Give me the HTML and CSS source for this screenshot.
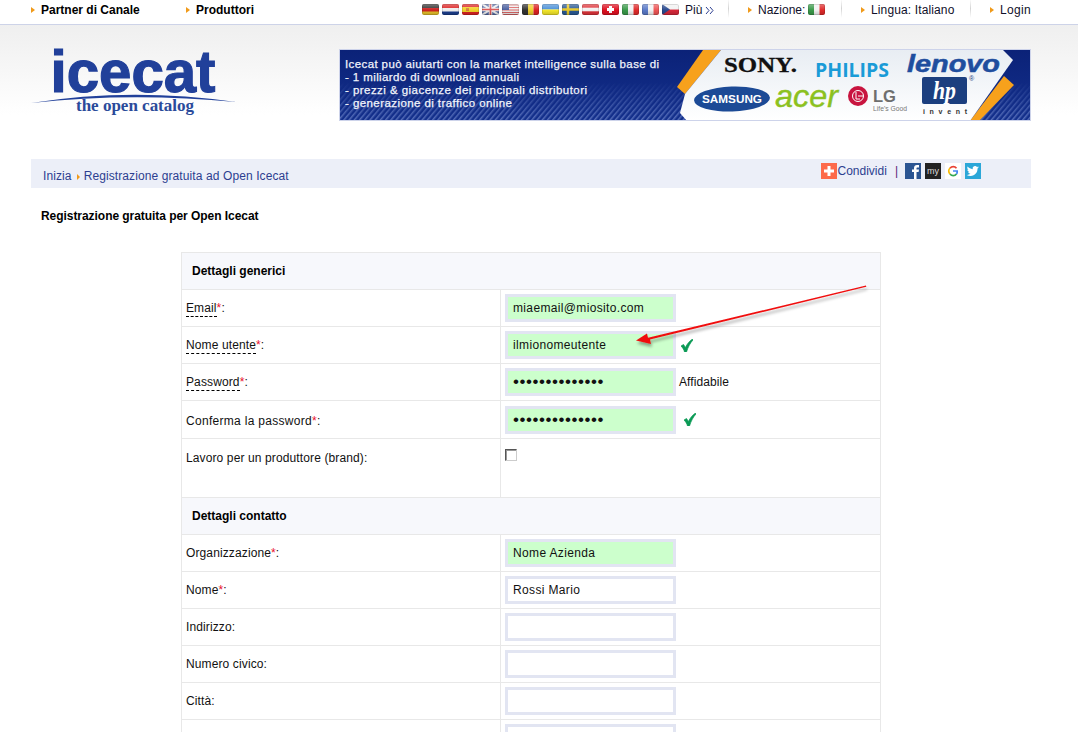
FILE: index.html
```html
<!DOCTYPE html>
<html lang="it">
<head>
<meta charset="utf-8">
<title>Registrazione gratuita per Open Icecat</title>
<link rel="stylesheet" href="styles.css">
</head>
<body>
<nav class="topbar">
  <a class="nav-item partner" href="#">Partner di Canale</a>
  <a class="nav-item products" href="#">Produttori</a>
  <div class="flags">
    <span class="flag"><svg viewBox="0 0 17 11"><rect width="17" height="4" fill="#333"/><rect y="4" width="17" height="4" fill="#c22"/><rect y="7.5" width="17" height="3.5" fill="#e8c22a"/></svg></span>
    <span class="flag"><svg viewBox="0 0 17 11"><rect width="17" height="4" fill="#d22"/><rect y="4" width="17" height="3.5" fill="#eee"/><rect y="7.5" width="17" height="3.5" fill="#1c3f8f"/></svg></span>
    <span class="flag"><svg viewBox="0 0 17 11"><rect width="17" height="11" fill="#d22"/><rect y="3" width="17" height="5" fill="#f2d02a"/><rect x="4" y="4" width="3" height="3" fill="#d8803a"/></svg></span>
    <span class="flag"><svg viewBox="0 0 17 11"><rect width="17" height="11" fill="#5a6fa8"/><path d="M0 0L17 11M17 0L0 11" stroke="#eee" stroke-width="2"/><path d="M8.5 0V11M0 5.5H17" stroke="#eee" stroke-width="3.5"/><path d="M8.5 0V11M0 5.5H17" stroke="#d55" stroke-width="1.6"/></svg></span>
    <span class="flag"><svg viewBox="0 0 17 11"><rect width="17" height="11" fill="#eee"/><path d="M0 1H17M0 3.5H17M0 6H17M0 8.5H17M0 10.5H17" stroke="#d66" stroke-width="1.2"/><rect width="7" height="6" fill="#4a5f9f"/></svg></span>
    <span class="flag"><svg viewBox="0 0 17 11"><rect width="6" height="11" fill="#333"/><rect x="6" width="5.5" height="11" fill="#f0d030"/><rect x="11.5" width="5.5" height="11" fill="#d22"/></svg></span>
    <span class="flag"><svg viewBox="0 0 17 11"><rect width="17" height="5.5" fill="#4a90d8"/><rect y="5.5" width="17" height="5.5" fill="#f5e82a"/></svg></span>
    <span class="flag"><svg viewBox="0 0 17 11"><rect width="17" height="11" fill="#2a5a95"/><path d="M6 0V11M0 5.5H17" stroke="#e8c82a" stroke-width="2.5"/></svg></span>
    <span class="flag"><svg viewBox="0 0 17 11"><rect width="17" height="11" fill="#e0343a"/><rect y="3.7" width="17" height="3.6" fill="#f2f2f2"/></svg></span>
    <span class="flag"><svg viewBox="0 0 17 11"><rect width="17" height="11" fill="#e01020"/><path d="M8.5 2V9M5 5.5H12" stroke="#fff" stroke-width="3"/></svg></span>
    <span class="flag"><svg viewBox="0 0 17 11"><rect width="6" height="11" fill="#3a9a4a"/><rect x="6" width="5.5" height="11" fill="#f2f2f2"/><rect x="11.5" width="5.5" height="11" fill="#e02a2a"/></svg></span>
    <span class="flag"><svg viewBox="0 0 17 11"><rect width="6" height="11" fill="#5a7ac8"/><rect x="6" width="5.5" height="11" fill="#f2f2f2"/><rect x="11.5" width="5.5" height="11" fill="#e55"/></svg></span>
    <span class="flag"><svg viewBox="0 0 17 11"><rect width="17" height="5.5" fill="#f2f2f2"/><rect y="5.5" width="17" height="5.5" fill="#d8283a"/><path d="M0 0L8 5.5L0 11Z" fill="#2a4a90"/></svg></span>
  </div>
  <a class="more" href="#">Più <svg class="chevrons" viewBox="0 0 9 9"><path d="M1 1L4 4.5L1 8M5 1L8 4.5L5 8" fill="none" stroke="#2c3e90"/></svg></a>
  <a class="nav-item country sep" href="#">Nazione: <span class="flag flag-inline"><svg viewBox="0 0 17 11"><rect width="6" height="11" fill="#3a9a4a"/><rect x="6" width="5.5" height="11" fill="#f2f2f2"/><rect x="11.5" width="5.5" height="11" fill="#e02a2a"/></svg></span></a>
  <a class="nav-item language sep" href="#">Lingua: Italiano</a>
  <a class="nav-item login sep" href="#">Login</a>
</nav>

<header class="masthead">
  <a class="logo" href="#">
    <svg viewBox="0 0 206 68" width="206" height="68">
      <text class="logo-word" x="19.500" y="42" textLength="165" lengthAdjust="spacingAndGlyphs">icecat</text>
      <path class="logo-arc" d="M0 53Q100 37 205 52Q100 42 0 53Z"/>
      <text class="logo-tag" x="45" y="61" textLength="118" lengthAdjust="spacingAndGlyphs">the open catalog</text>
    </svg>
  </a>
  <svg class="banner" viewBox="1 0 690 70" width="690" height="70">
    <defs>
      <linearGradient id="navy" x1="0" y1="0" x2="0" y2="1"><stop offset="0" stop-color="#0b2278"/><stop offset="1" stop-color="#14308c"/></linearGradient>
      <linearGradient id="panel" x1="0" y1="0" x2="0" y2="1"><stop offset="0" stop-color="#e8edf3"/><stop offset="1" stop-color="#ffffff"/></linearGradient>
      <linearGradient id="fade" x1="0" y1="0" x2="0" y2="1"><stop offset=".45" stop-color="#fff" stop-opacity="0"/><stop offset="1" stop-color="#fff" stop-opacity="1"/></linearGradient>
      <pattern id="hatch" width="4" height="4" patternUnits="userSpaceOnUse" patternTransform="rotate(40)"><rect width="1.5" height="4" fill="#5a72bc"/></pattern>
      <mask id="hatch-mask"><rect width="692" height="71" fill="url(#fade)"/></mask>
    </defs>
    <rect width="692" height="71" fill="url(#navy)"/>
    <rect width="692" height="71" fill="url(#hatch)" mask="url(#hatch-mask)"/>
    <path d="M364 0H382L346 44L338 37Z" fill="#f7a11c"/>
    <path d="M382 0H664L674 10L631 71H348L341 63L346 44Z" fill="url(#panel)"/>
    <path d="M665 26L675 35L640 71H631Z" fill="#f7a11c"/>
    <g class="banner-copy">
      <text x="6" y="18" textLength="314">Icecat può aiutarti con la market intelligence sulla base di</text>
      <text x="6" y="31" textLength="174">- 1 miliardo di download annuali</text>
      <text x="6" y="44" textLength="242">- prezzi &amp; giacenze dei principali distributori</text>
      <text x="6" y="57" textLength="167">- generazione di traffico online</text>
    </g>
    <text class="b-sony" x="385" y="22" textLength="73" lengthAdjust="spacingAndGlyphs">SONY.</text>
    <text class="b-philips" x="476" y="27" textLength="74" lengthAdjust="spacingAndGlyphs">PHILIPS</text>
    <text class="b-lenovo" x="568" y="22" textLength="93" lengthAdjust="spacingAndGlyphs">lenovo</text>
    <ellipse cx="393" cy="49" rx="38" ry="12.5" fill="#1c4a96" transform="rotate(-2 393 49)"/>
    <text class="b-samsung" x="363" y="53" textLength="60" lengthAdjust="spacingAndGlyphs">SAMSUNG</text>
    <text class="b-acer" x="436" y="57" textLength="63" lengthAdjust="spacingAndGlyphs">acer</text>
    <circle cx="519" cy="46" r="10" fill="#c8143f"/>
    <circle cx="519" cy="46" r="5.5" fill="none" stroke="#fff" stroke-width="1"/>
    <path d="M517 42V49H521M519 46H524" fill="none" stroke="#fff" stroke-width="1"/>
    <text class="b-lg" x="534" y="52" textLength="23" lengthAdjust="spacingAndGlyphs">LG</text>
    <text class="b-life" x="534" y="61" textLength="34" lengthAdjust="spacingAndGlyphs">Life's Good</text>
    <rect x="583" y="27" width="45" height="27" rx="2" fill="#1c3f7f"/>
    <text class="b-hp" x="594" y="49" textLength="23" lengthAdjust="spacingAndGlyphs">hp</text>
    <text class="b-reg" x="630" y="31">®</text>
    <text class="b-invent" x="584" y="64" textLength="44">invent</text>
  </svg>
</header>

<div class="crumbs">
  <div class="trail">
    <a href="#">Inizia</a>
    <span class="crumb-arrow"></span>
    <a href="#">Registrazione gratuita ad Open Icecat</a>
  </div>
  <div class="share">
    <span class="ico ico-share"><svg viewBox="0 0 16 16"><path d="M8 3V13M3 8H13" stroke="#fff" stroke-width="3"/></svg></span>
    <a href="#">Condividi</a>
    <span class="pipe">|</span>
    <span class="ico ico-fb"><svg viewBox="0 0 16 16"><path d="M9 16V9H7V6.500H9V5C9 3 10.200 2 12 2H14V4.500H12.500C11.800 4.500 11.500 4.800 11.500 5.500V6.500H14L13.600 9H11.500V16Z" fill="#fff"/></svg></span>
    <span class="ico ico-my">my</span>
    <span class="ico ico-g"><svg viewBox="0 0 16 16"><path d="M11.500 5.200A4.200 4.200 0 0 0 5 5.200" fill="none" stroke="#e94235" stroke-width="1.700"/><path d="M5 5A4.200 4.200 0 0 0 5 11" fill="none" stroke="#fabb05" stroke-width="1.700"/><path d="M5 11A4.200 4.200 0 0 0 11.500 11" fill="none" stroke="#34a853" stroke-width="1.700"/><path d="M11.500 11A4.200 4.200 0 0 0 12.200 8H8" fill="none" stroke="#4285f4" stroke-width="1.700"/></svg></span>
    <span class="ico ico-tw"><svg viewBox="0 0 16 16"><path d="M14 4.300C13.500 4.500 13 4.700 12.500 4.700C13 4.400 13.400 3.900 13.600 3.300C13.100 3.600 12.600 3.800 12 3.900A2.500 2.500 0 0 0 7.700 6.200C5.600 6.100 3.800 5.100 2.600 3.600C2 4.700 2.300 6.100 3.400 6.900C3 6.900 2.600 6.800 2.300 6.600C2.300 7.800 3.100 8.800 4.300 9C3.900 9.100 3.500 9.100 3.200 9.100C3.500 10.100 4.400 10.800 5.500 10.800C4.400 11.600 3.100 12 1.700 11.900C2.800 12.600 4.100 13 5.500 13C10.100 13 12.700 9.100 12.500 5.600C13.100 5.300 13.600 4.800 14 4.300Z" fill="#fff"/></svg></span>
  </div>
</div>

<h1 class="page-title">Registrazione gratuita per Open Icecat</h1>

<form class="form-wrap">
  <table class="form-table">
    <colgroup><col class="col-label"><col class="col-value"></colgroup>
    <tr class="section"><td colspan="2">Dettagli generici</td></tr>
    <tr>
      <td class="lbl"><span class="hint">Email</span><span class="req">*</span>:</td>
      <td class="val"><input class="field ok" type="text" value="miaemail@miosito.com"></td>
    </tr>
    <tr>
      <td class="lbl"><span class="hint">Nome utente</span><span class="req">*</span>:</td>
      <td class="val"><input class="field ok" type="text" value="ilmionomeutente"><svg class="tick" viewBox="0 0 12 13"><path d="M0 7L2.500 5.500L4.500 8.500C6 5 8.500 2 11.500 0L12 1C9.500 3.500 7 8 5.500 13H3.500C3 10.500 1.500 8.500 0 7Z"/></svg></td>
    </tr>
    <tr>
      <td class="lbl"><span class="hint">Password</span><span class="req">*</span>:</td>
      <td class="val"><input class="field ok secret" type="password" value="ilmiapassword1"><span class="strength">Affidabile</span></td>
    </tr>
    <tr class="tall">
      <td class="lbl">Conferma la password<span class="req">*</span>:</td>
      <td class="val"><input class="field ok secret" type="password" value="ilmiapassword1"><svg class="tick tick-wide" viewBox="0 0 12 13"><path d="M0 7L2.500 5.500L4.500 8.500C6 5 8.500 2 11.500 0L12 1C9.500 3.500 7 8 5.500 13H3.500C3 10.500 1.500 8.500 0 7Z"/></svg></td>
    </tr>
    <tr class="brand">
      <td class="lbl">Lavoro per un produttore (brand):</td>
      <td class="val"><input class="check" type="checkbox"></td>
    </tr>
    <tr class="section"><td colspan="2">Dettagli contatto</td></tr>
    <tr>
      <td class="lbl">Organizzazione<span class="req">*</span>:</td>
      <td class="val"><input class="field ok" type="text" value="Nome Azienda"></td>
    </tr>
    <tr>
      <td class="lbl">Nome<span class="req">*</span>:</td>
      <td class="val"><input class="field" type="text" value="Rossi Mario"></td>
    </tr>
    <tr>
      <td class="lbl">Indirizzo:</td>
      <td class="val"><input class="field" type="text"></td>
    </tr>
    <tr>
      <td class="lbl">Numero civico:</td>
      <td class="val"><input class="field" type="text"></td>
    </tr>
    <tr>
      <td class="lbl">Città:</td>
      <td class="val"><input class="field" type="text"></td>
    </tr>
    <tr>
      <td class="lbl"></td>
      <td class="val"><input class="field" type="text"></td>
    </tr>
  </table>
</form>

<svg class="callout" viewBox="0 0 1078 732" width="1078" height="732">
  <defs><filter id="soft" x="-10%" y="-30%" width="120%" height="170%"><feDropShadow dx="1" dy="3" stdDeviation="1.500" flood-color="#000" flood-opacity=".35"/></filter></defs>
  <path d="M866 285.500L866.300 286.700L650 339.600L651 344L636 340.500L647 333.500L648 337.800Z" fill="#f01010" filter="url(#soft)"/>
</svg>
</body>
</html>
```
FILE: styles.css
```css
html, body {
  margin: 0;
  height: 732px;
  overflow: hidden;
}
body {
  position: relative;
  background: #fff;
  color: #111;
  font: 12px/15px "Liberation Sans", Arial, sans-serif;
}
a { color: inherit; text-decoration: none; }

/* top bar */
.topbar {
  display: flex;
  align-items: center;
  height: 18px;
  padding: 1px 0 5px;
  border-bottom: 1px solid #cdd3e8;
  color: #10102a;
}
.nav-item {
  display: flex;
  align-items: center;
  gap: 3px;
  position: relative;
  padding-left: 10px;
}
.nav-item::before {
  content: "";
  position: absolute;
  left: 0;
  top: 4px;
  border-left: 4px solid #f09a1a;
  border-top: 3px solid transparent;
  border-bottom: 3px solid transparent;
}
.partner { margin-left: 31px; width: 145px; font-weight: 700; color: #000; }
.products { font-weight: 700; color: #000; width: 226px; }
.flags { display: flex; gap: 3px; width: 263px; margin-top: -2px; }
.flag {
  display: inline-block;
  position: relative;
  width: 17px;
  height: 11px;
  border-radius: 2px;
  overflow: hidden;
  flex: none;
}
.flag-inline { margin-top: -2px; }
.flag svg { display: block; width: 17px; height: 11px; }
.flag::after {
  content: "";
  position: absolute;
  inset: 0;
  background: linear-gradient(rgba(255,255,255,.35), rgba(255,255,255,0) 55%, rgba(0,0,0,.18));
  box-shadow: inset 0 0 0 1px rgba(0,0,0,.12);
  border-radius: 2px;
}
.more { display: flex; align-items: center; gap: 3px; width: 63px; }
.chevrons { width: 9px; height: 9px; }
.sep::after {
  content: "";
  position: absolute;
  top: -4px;
  left: -20px;
  width: 1px;
  height: 19px;
  background: linear-gradient(#fff, #d4d4d4 50%, #fff);
}
.country { width: 103px; }
.language { width: 119px; letter-spacing: .13px; }
.login { width: 60px; letter-spacing: .3px; }

/* masthead */
.masthead {
  display: flex;
  align-items: flex-start;
  height: 134px;
  padding: 25px 0 0 31px;
  box-sizing: border-box;
  background: linear-gradient(#efefef, #fff 90px);
}
.logo { display: block; width: 309px; flex: none; }
.logo svg { display: block; overflow: visible; }
.logo-word {
  font: 700 60px "Liberation Sans", Arial, sans-serif;
  fill: #21409a;
  stroke: #21409a;
  stroke-width: 1.200px;
}
.logo-arc { fill: #21409a; }
.logo-tag { font: 700 16px "Liberation Serif", serif; fill: #2a4a9a; }
.banner { flex: none; outline: 1px solid #cdd3ea; }
.banner-copy { font: 400 11.500px "Liberation Sans", Arial, sans-serif; fill: #f2f4fb; }
.banner-copy text { stroke: #f2f4fb; stroke-width: .25px; }
.b-sony { font: 700 21px "Liberation Serif", serif; fill: #111; stroke: #111; stroke-width: .3px; }
.b-philips { font: 700 20px "Open Sans", sans-serif; fill: #1a9bd7; }
.b-lenovo { font: italic 700 23px "Liberation Sans", sans-serif; fill: #1f4e9e; stroke: #1f4e9e; stroke-width: .5px; }
.b-samsung { font: 700 11px "Liberation Sans", sans-serif; fill: #fff; }
.b-acer { font: italic 400 32px "Liberation Sans", sans-serif; fill: #8cc11f; stroke: #8cc11f; stroke-width: .4px; }
.b-lg { font: 700 16px "Liberation Sans", sans-serif; fill: #6e6e6e; }
.b-life { font: 8px "Liberation Sans", sans-serif; fill: #777; }
.b-hp { font: italic 700 25px "Liberation Serif", serif; fill: #fff; }
.b-reg { font: 7px "Liberation Sans", sans-serif; fill: #1c3f7f; }
.b-invent { font: 700 7px "Liberation Sans", sans-serif; fill: #333; }

/* breadcrumb */
.crumbs {
  display: flex;
  justify-content: space-between;
  align-items: flex-start;
  width: 1000px;
  height: 29px;
  margin-left: 31px;
  background: #eceff8;
  color: #2c3e90;
}
.trail {
  display: flex;
  align-items: center;
  padding: 10px 0 0 12px;
  letter-spacing: .1px;
}
.crumb-arrow {
  margin: 0 4px 0 5px;
  border-left: 3px solid #f09a1a;
  border-top: 3px solid transparent;
  border-bottom: 3px solid transparent;
}
.share {
  display: flex;
  align-items: center;
  padding: 4px 50px 0 0;
}
.ico {
  display: block;
  width: 16px;
  height: 16px;
  flex: none;
}
.ico svg { display: block; width: 16px; height: 16px; }
.ico-share { background: #fd6a4a; margin-right: 1px; }
.pipe { color: #5a1a7a; margin: 0 7px 0 8px; }
.ico-fb { background: #2b5592; margin-right: 4px; }
.ico-my {
  background: #222;
  color: #ddd;
  font-size: 9px;
  line-height: 16px;
  text-align: center;
  margin-right: 4px;
}
.ico-g { background: #fff; margin-right: 4px; }
.ico-tw { background: #2ca7d8; }

.page-title {
  margin: 21px 0 28px 41px;
  font-size: 12px;
  line-height: 15px;
  font-weight: 700;
  color: #000;
  letter-spacing: -.05px;
}

/* form table */
.form-wrap { margin-left: 181px; }
.form-table {
  width: 700px;
  border-collapse: collapse;
  table-layout: fixed;
}
.col-label { width: 319px; }
.form-table td {
  border: 1px solid #e8e8e8;
  padding: 4px;
  height: 36px;
  box-sizing: border-box;
}
.section td {
  height: 37px;
  background: #f7f8fc;
  padding-left: 10px;
  font-weight: 700;
  color: #000;
}
.lbl { letter-spacing: .12px; }
.val { white-space: nowrap; }
.form-table .tall td { height: 38px; }
.tall .lbl { padding-top: 7px; letter-spacing: .3px; }
.form-table .brand td { height: 59px; vertical-align: top; padding-top: 10px; }
.form-table .brand .lbl { padding-top: 12px; }
.hint { border-bottom: 1px dashed #000; padding-bottom: 1px; }
.req { color: #e8112d; }
.field {
  width: 171px;
  height: 28px;
  box-sizing: border-box;
  border: 3px solid #e2e5f2;
  padding: 0 5px;
  margin: 0;
  background: #fff;
  color: #111;
  font: 12px "Liberation Sans", Arial, sans-serif;
  letter-spacing: .35px;
  vertical-align: middle;
  outline: none;
}
.field.ok { background: #ccffcc; }
.secret { font-size: 17px; letter-spacing: .55px; }
.strength { margin-left: 3px; vertical-align: middle; letter-spacing: .1px; }
.tick {
  width: 12px;
  height: 13px;
  margin-left: 5px;
  vertical-align: middle;
  fill: #0a9a55;
  stroke: #0a9a55;
  stroke-width: .7px;
}
.tick-wide { margin-left: 8px; }
.check {
  display: block;
  appearance: none;
  box-sizing: border-box;
  width: 12px;
  height: 12px;
  margin: 0;
  border: 1px solid;
  border-color: #555 #ccc #ccc #555;
  box-shadow: inset 1px 1px 0 #999;
  background: #fff;
}

/* annotation drawn over the form */
.callout {
  position: absolute;
  left: 0;
  top: 0;
  pointer-events: none;
}
```
